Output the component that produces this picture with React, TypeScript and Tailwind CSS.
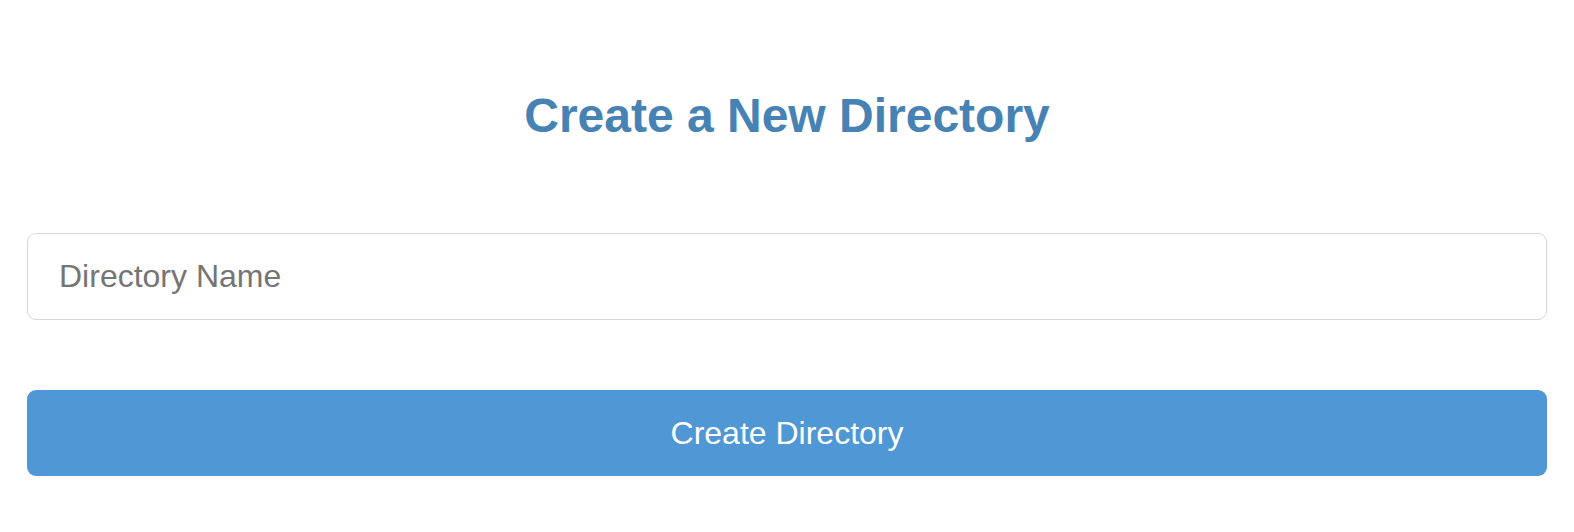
import React from "react";

export default function App() {
  return (
    <div
      className="w-full min-h-[532px] bg-white px-[27px] pt-[88px]"
      style={{ fontFamily: '"Liberation Sans", Arial, Helvetica, sans-serif' }}
    >
      <h1 className="text-center text-[48px] leading-[55px] font-bold text-[#4682b4]">
        Create a New Directory
      </h1>
      <div className="mt-[90px] flex flex-col gap-[70px]">
        <input
          type="text"
          placeholder="Directory Name"
          className="h-[87px] w-full rounded-[9px] border border-[#d6d6d6] bg-white pl-[31px] text-[32px] text-[#333] placeholder:text-[#757575] outline-none"
        />
        <button className="h-[86px] w-full rounded-[9px] bg-[#5097d5] text-[32px] text-white">
          Create Directory
        </button>
      </div>
    </div>
  );
}
